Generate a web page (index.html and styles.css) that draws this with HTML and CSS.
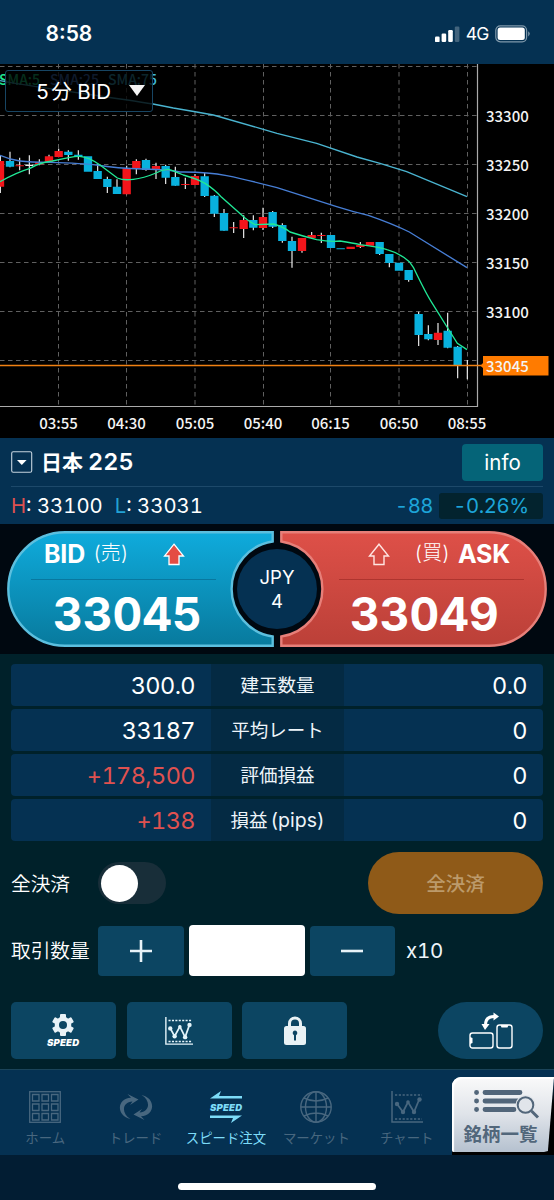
FILE: index.html
```html
<!DOCTYPE html>
<html lang="ja">
<head>
<meta charset="utf-8">
<title>スピード注文</title>
<link rel="stylesheet" href="styles.css">
</head>
<body>
<main class="app">
  <header class="status">
    <span class="clock">8:58</span>
    <div class="signals">
      <svg width="25" height="16" viewBox="0 0 25 16"><g fill="#fff"><rect y="10.5" width="4.6" height="5.8" rx="1.2"/><rect x="6.6" y="7.5" width="4.6" height="8.5" rx="1.2"/><rect x="13.2" y="4" width="4.6" height="12" rx="1.2"/><rect x="19.8" y="0.5" width="4.6" height="15.5" rx="1.2" opacity=".25"/></g></svg>
      <span class="net">4G</span>
      <svg width="36" height="18" viewBox="0 0 36 18"><rect x=".8" y=".8" width="30.8" height="16" rx="4.5" fill="none" stroke="#7f98aa" stroke-width="1.2"/><rect x="2.6" y="2.6" width="27.2" height="12.4" rx="2.5" fill="#fff"/><path d="M33.2 6.2q3.2 2.6 0 5.2z" fill="#7f98aa"/></svg>
    </div>
  </header>

  <section class="chart">
    <svg class="plot" width="554" height="374" viewBox="0 64 554 374">
      <g class="grid">
        <path d="M0 66.5H477M0 115.5H477M0 164.5H477M0 213.5H477M0 262.5H477M0 311.5H477M0 360.5H477"/>
        <path d="M58.5 64V406M126.5 64V406M195 64V406M263.5 64V406M330.5 64V406M399 64V406M467.5 64V406"/>
      </g>
      <path class="axis" d="M0 406.5H477.5V64"/>
      <g class="sma-label"><text x="-1" y="85"><tspan fill="#1fe58f">SMA:5</tspan><tspan fill="#4b84dc" x="50">SMA:25</tspan><tspan fill="#3fb8d8" x="108">SMA:75</tspan></text></g>
      <g transform="translate(0 60) scale(.33333)">
        <path class="wick" d="M1 285V399M30 275V322M59 293V331M88 286V343M118 298V316M147 284V305M176 266V292M205 271V302M235 271V299M293 313V357M322 350V399M351 358V402M380 317V403M409 298V343M438 296V332M468 308V357M497 314V372M526 320V377M556 353V387M585 342V375M614 339V411M643 405V471M672 447V512M701 486V519M731 466V534M760 466V511M789 443V510M818 453V504M847 490V548M876 530V623M906 534V578M935 516V536M964 518V549M1081 546V564M1139 546V585M1168 582V622M1226 630V665M1256 755V858M1285 796V841M1314 789V855M1343 758V865M1373 858V955M1402 900V958M76 316H100"/>
        <path class="up" d="M0 303V380M118 306V313M147 289V305M176 273V291M380 325V403M409 303V326M468 318V328M585 348V375M731 480V507M789 471V504M906 534V573M935 525V534M1052 560V567M1081 555V561M1110 546V557M1314 818V840M59 316V319M556 372V375M701 502V505M964 525V528"/>
        <path class="down" d="M30 303V320M205 275V285M235 284V291M264 289V335M293 333V357M322 357V381M351 380V402M438 300V330M497 318V353M526 351V377M614 349V408M643 407V461M672 459V512M760 480V503M818 456V500M847 495V543M876 543V573M993 525V564M1022 565V568M1139 546V582M1168 582V609M1197 608V632M1226 630V660M1256 762V825M1285 822V838M1343 812V863M1373 860V917"/>
        <path class="line" stroke="#4ab4d0" d="M0 62C100 82 330 110 459 132L520 144L590 156L640 165L790 208L831 220L950 250L1071 291L1140 310L1220 335L1401 410"/>
        <path class="line" stroke="#477ed5" d="M0 286Q30 299 60 303T150 307Q250 310 290 315Q350 325 430 327T540 336Q620 335 680 347T831 383Q960 424 1010 440T1105 466Q1180 492 1228 516L1401 623"/>
        <path class="line" stroke="#20e896" d="M0 365Q50 337 90 325Q120 307 157 303Q220 288 238 289Q265 290 300 315Q340 345 352 354Q370 362 400 358Q430 355 468 339Q485 329 505 328Q520 332 550 345Q590 356 615 370Q645 389 665 412L736 475Q754 489 766 494L820 492Q850 500 870 516Q910 529 950 539Q990 546 1020 543Q1060 549 1080 554Q1140 562 1161 569Q1200 580 1228 605L1240 622Q1280 705 1295 727L1343 804L1372 850L1401 869"/>
      </g>
      <path d="M0 365.5H483" stroke="#f08012" stroke-width="1.5"/>
      <path d="M483 356H548.5V375.5H483V368L480.5 365.7L483 363Z" fill="#ff7b00"/>
      <g class="ticks">
        <text x="486" y="122">33300</text><text x="486" y="171">33250</text><text x="486" y="220">33200</text><text x="486" y="269">33150</text><text x="486" y="318">33100</text><text x="486" y="372">33045</text>
      </g>
      <g class="ticks times">
        <text x="58.5" y="429">03:55</text><text x="126.5" y="429">04:30</text><text x="195" y="429">05:05</text><text x="263" y="429">05:40</text><text x="330.5" y="429">06:15</text><text x="399" y="429">06:50</text><text x="467" y="429">08:55</text>
      </g>
    </svg>
    <button class="period"><span>5<i></i>分 BID</span><svg width="16" height="11" viewBox="0 0 16 11"><path d="M0 0H16L8 11Z" fill="#f4f4f4"/></svg></button>
  </section>

  <section class="symbol">
    <div class="symbol-head">
      <svg width="22" height="22" viewBox="0 0 22 22"><rect x=".7" y=".7" width="20" height="20.6" rx="1.5" fill="none" stroke="#c5d3de" stroke-width="1.1"/><path d="M6 9H15.6L10.8 14Z" fill="#fff"/></svg>
      <h1><span>日本</span>225</h1>
      <button class="info">info</button>
    </div>
    <div class="symbol-sub">
      <span class="hl"><b class="red">H</b>: 33100</span>
      <span class="hl"><b class="blue">L</b>: 33031</span>
      <span class="diff">-88</span>
      <span class="pct">-0.26%</span>
    </div>
  </section>

  <section class="quotes">
    <button class="quote bid">
      <svg class="shape" width="267" height="116" viewBox="0 0 267 116"><defs><linearGradient id="gb" x2="0" y2="1"><stop stop-color="#0fabdc"/><stop offset="1" stop-color="#087a9d"/></linearGradient></defs><path d="M58 1.3H265.700V10.500A48 48 0 0 0 265.700 105.500V114.700H58A56.700 56.700 0 0 1 58 1.3Z" fill="url(#gb)" stroke="#5cbfde" stroke-width="2.400"/></svg>
      <span class="q-head"><strong>BID</strong><small>(売)</small><svg width="22" height="23" viewBox="0 0 22 23"><path d="M11 1.200L20.500 13H16V21.500H6V13H1.500Z" fill="#e44d43" stroke="#fff" stroke-width="1.300"/></svg></span>
      <span class="price">33045</span>
    </button>
    <button class="quote ask">
      <svg class="shape" width="267" height="116" viewBox="0 0 267 116"><defs><linearGradient id="gr" x2="0" y2="1"><stop stop-color="#de5048"/><stop offset="1" stop-color="#bb4038"/></linearGradient></defs><path d="M209 1.3H1.300V10.500A48 48 0 0 1 1.300 105.500V114.700H209A56.700 56.700 0 0 0 209 1.3Z" fill="url(#gr)" stroke="#e77f79" stroke-width="2.400"/></svg>
      <span class="q-head"><svg width="22" height="23" viewBox="0 0 22 23"><path d="M11 1.200L20.500 13H16V21.500H6V13H1.500Z" fill="none" stroke="#ffe5e2" stroke-width="1.400"/></svg><small>(買)</small><strong>ASK</strong></span>
      <span class="price">33049</span>
    </button>
    <div class="spread"><span>JPY</span><span>4</span></div>
  </section>

  <section class="panel">
    <div class="positions">
      <div class="row"><span>300.0</span><em>建玉数量</em><span>0.0</span></div>
      <div class="row"><span>33187</span><em>平均レート</em><span>0</span></div>
      <div class="row"><span class="red">+178,500</span><em>評価損益</em><span>0</span></div>
      <div class="row"><span class="red">+138</span><em>損益<u>(pips)</u></em><span>0</span></div>
    </div>
    <div class="close-row"><label>全決済</label><span class="toggle"><i></i></span><button class="close-all">全決済</button></div>
    <div class="qty"><label>取引数量</label>
      <button class="step"><svg width="22" height="24" viewBox="0 0 22 24"><path d="M0 12H22M11 1V23" stroke="#e9f3f8" stroke-width="2.600"/></svg></button>
      <input class="amount" aria-label="取引数量">
      <button class="step"><svg width="22" height="24" viewBox="0 0 22 24"><path d="M0 12H22" stroke="#e9f3f8" stroke-width="2.600"/></svg></button>
      <span class="mult">x10</span></div>
    <div class="tools">
      <button><svg width="36" height="34" viewBox="0 0 36 34"><g transform="translate(17 11)"><g fill="#e9f2f7"><rect x="-3" y="-11" width="6" height="22" rx="1"/><rect x="-3" y="-11" width="6" height="22" rx="1" transform="rotate(60)"/><rect x="-3" y="-11" width="6" height="22" rx="1" transform="rotate(120)"/><circle r="8.300"/></g><circle r="4" fill="#0c4562"/></g><text class="speed" x="17" y="32" textLength="32" fill="#fff">SPEED</text></svg></button>
      <button><svg width="28" height="28" viewBox="0 0 32 32"><g fill="none" stroke="#e4f4fa" stroke-width="1.600"><path d="M1 0V31H32"/><path d="M4 4H31M4 28H31" stroke-dasharray="2.400 1.500"/><path d="M6 13L11 22L17 11L23 23L28 9" stroke-width="2"/></g><g fill="#e4f4fa"><circle cx="6" cy="13" r="2.500"/><circle cx="11" cy="22" r="2.500"/><circle cx="17" cy="11" r="2"/><circle cx="23" cy="23" r="2.500"/><circle cx="28" cy="9" r="2.500"/></g></svg></button>
      <button><svg width="22" height="30" viewBox="0 0 22 30"><path d="M5.500 11V7.500a5.500 5.500 0 0 1 11 0V11" fill="none" stroke="#e9f2f5" stroke-width="3"/><rect y="10" width="22" height="19" rx="2.500" fill="#e9f2f5"/><path d="M11 14.500a2.500 2.500 0 0 1 1 4.700V24.500H10V19.200A2.500 2.500 0 0 1 11 14.500" fill="#0c4562"/></svg></button>
      <button class="rotate"><svg width="44" height="38" viewBox="0 0 44 38"><g fill="none" stroke="#fff" stroke-width="1.400"><rect x="1" y="21" width="23" height="15" rx="2.500"/><rect x="28" y="13" width="15" height="23" rx="2.500"/><path d="M16.500 13Q16.500 4.500 25 4.500" stroke-width="3"/></g><path d="M24.500 .5L30 4.500L24.500 8.500ZM12.500 12H20.500L16 18ZM31.500 13H39.500L38.500 15.500H32.500ZM1 25L3.500 26V31L1 32Z" fill="#fff"/></svg></button>
    </div>
  </section>

  <nav class="tabs">
    <a><svg width="32" height="32" viewBox="0 0 32 32"><g fill="none" stroke="currentColor" stroke-width="1.300"><rect x=".7" y=".7" width="30.600" height="30.600"/><path d="M3.500 3.500H10V10H3.500ZM13 3.500H19.500V10H13ZM22.500 3.500H29V10H22.500ZM3.500 13H10V19.500H3.500ZM13 13H19.500V19.500H13ZM22.500 13H29V19.500H22.500ZM3.500 22.500H10V29H3.500ZM13 22.500H19.500V29H13ZM22.500 22.500H29V29H22.500Z"/></g></svg><span>ホーム</span></a>
    <a><svg width="34" height="32" viewBox="0 0 34 32"><g fill="currentColor"><path d="M11.500 28C-3 25 -2.500 7.500 12 6.800L8.500 3L19.500 8.500L11 14L13.500 10.500C3 11 2 22.500 11.500 28Z"/><path d="M22.500 4C37 7 36.500 24.500 22 25.200L25.500 29L14.500 23.500L23 18L20.500 21.500C31 21 32 9.500 22.500 4Z"/></g></svg><span>トレード</span></a>
    <a class="active"><svg width="34" height="32" viewBox="0 0 34 32"><path d="M1 7.500L12 0L10 5H33V7.500ZM33 24.500L22 32L24 27H1V24.500Z" fill="currentColor"/><text class="speed" x="17" y="19.600" textLength="32" fill="currentColor">SPEED</text></svg><span>スピード注文</span></a>
    <a><svg width="32" height="32" viewBox="0 0 32 32"><g fill="none" stroke="currentColor" stroke-width="1.400"><circle cx="16" cy="16" r="15.200"/><ellipse cx="16" cy="16" rx="10.500" ry="15.200"/><path d="M16 1V31M1 16H31M4 7Q16 13 28 7M4 25Q16 19 28 25"/></g></svg><span>マーケット</span></a>
    <a><svg width="32" height="32" viewBox="0 0 32 32"><g fill="none" stroke="currentColor" stroke-width="1.500"><path d="M1 0V31H32"/><path d="M4 4H31M4 28H31" stroke-dasharray="2.200 1.600"/><path d="M6 13L12 21L17 11L23 21L28 9" stroke-width="1.800"/></g><g fill="currentColor"><circle cx="6" cy="13" r="2.200"/><circle cx="12" cy="21" r="2.200"/><circle cx="17" cy="11" r="1.800"/><circle cx="23" cy="21" r="2.200"/><circle cx="28.500" cy="8.500" r="2.200"/></g></svg><span>チャート</span></a>
    <div class="list-wrap"><button class="list"><svg width="66" height="30" viewBox="0 0 66 30"><g stroke="#52667a" stroke-linecap="round" stroke-width="4.800"><path d="M2.500 3.500H2.600M2.500 12H2.600M2.500 20.500H2.600M11 3.500H46M11 12H44M11 20.500H40"/></g><circle cx="51.500" cy="16" r="10" fill="#e1e5ea"/><circle cx="51.500" cy="16" r="7.800" fill="#e1e5ea" stroke="#52667a" stroke-width="2"/><path d="M57.500 22L64 28.500" stroke="#52667a" stroke-width="3"/></svg><span>銘柄一覧</span></button></div>
  </nav>
  <footer class="home"><i></i></footer>
</main>
</body>
</html>
```
FILE: styles.css
```css
* { box-sizing: border-box; }
body { margin: 0; background: #021d33; color: #fff; font-family: Inter, "Noto Sans CJK JP", sans-serif; font-variant-numeric: tabular-nums; }
button { border: 0; padding: 0; margin: 0; color: inherit; font: inherit; font-variant-numeric: inherit; }
svg { display: block; flex: none; }
.app { width: 554px; height: 1200px; overflow: hidden; display: flex; flex-direction: column; }
.red { color: #df5150; }
.blue { color: #22a2d5; }

.status { height: 64px; background: #053152; display: flex; justify-content: space-between; align-items: center; padding: 4px 23px 0 45.5px; }
.clock { font-size: 21px; font-weight: 600; font-variant-numeric: normal; padding-bottom: 1px; }
.signals { display: flex; align-items: center; gap: 5.5px; }
.net { font-size: 17.500px; line-height: 18px; letter-spacing: -.8px; margin-right: 1px; }

.chart { position: relative; height: 374px; background: #000; }
.grid path { fill: none; stroke: #606060; stroke-width: 1; stroke-dasharray: 4.500 3.500; }
.axis { fill: none; stroke: #aaa; stroke-width: 1.2; }
.wick { stroke: #eee; stroke-width: 3.5; fill: none; }
.up { stroke: #f3151b; stroke-width: 25; }
.down { stroke: #08b1de; stroke-width: 25; }
.line { fill: none; stroke-width: 4; }
.ticks text { font: 500 15px "Noto Sans CJK JP", sans-serif; fill: #f4f4f4; }
.times text { text-anchor: middle; }
.sma-label text { font: 500 14px "Noto Sans CJK JP", sans-serif; }
.period { position: absolute; left: 5px; top: 6px; width: 148px; height: 42px; border: 1px solid #174563; border-radius: 3px; background: rgba(0, 0, 0, .8); display: flex; align-items: center; justify-content: space-between; padding: 0 7px 2px 30px; font-size: 20.5px; }
.period span { white-space: nowrap; }
.period i { display: inline-block; width: 2px; }

.symbol { height: 86px; background: #053152; padding: 0 11px; }
.symbol-head { height: 49px; border-bottom: 1px solid #1d496a; display: flex; align-items: center; }
h1 { margin: 0 auto 0 8px; font-size: 23.5px; font-weight: 600; line-height: 30px; }
h1 span { font-size: 21px; font-weight: 700; margin-right: 5px; }
.info { width: 81px; height: 37px; border-radius: 4px; background: #056478; font-size: 20.5px; }
.symbol-sub { height: 37px; display: flex; align-items: center; font-size: 20.3px; }
.symbol-sub b { font-weight: 400; }
.hl { margin-right: 12px; white-space: pre; }
.diff { margin-left: auto; color: #1da5d9; letter-spacing: -.5px; }
.pct { margin-left: 6px; width: 104px; height: 26px; line-height: 26px; border-radius: 3px; background: #03232e; color: #1da5d9; text-align: center; letter-spacing: -.4px; }

.quotes { position: relative; height: 130px; background: #000810; padding: 7px 7px 7px; display: flex; justify-content: space-between; }
.quote { position: relative; width: 267px; height: 116px; padding-bottom: 5px; background: none; text-align: left; display: block; }
.shape { position: absolute; left: 0; top: 0; }
.q-head { position: relative; display: flex; align-items: center; height: 48px; margin-left: 24px; width: 185px; border-bottom: 1.5px solid rgba(0, 40, 70, .28); padding: 0 31px 3px 13px; }
.q-head strong { font-size: 25px; line-height: 30px; letter-spacing: -.2px; }
.q-head small { font-size: 20px; line-height: 24px; font-weight: 300; margin-left: 8px; padding-bottom: 2px; }
.q-head svg { margin-left: auto; }
.ask .q-head { margin-left: 59px; border-color: rgba(90, 0, 0, .28); padding: 0 14px 3px 29px; }
.ask .q-head svg { margin: 0; }
.ask .q-head small { margin: 0 8px 0 auto; }
.price { position: relative; display: block; font-size: 46px; font-weight: 700; line-height: 54px; margin-top: 7px; padding-left: 46px; }
.ask .price { padding-left: 70px; }
.spread { position: absolute; left: 237px; top: 25px; width: 80px; height: 80px; border-radius: 50%; background: #053152; display: flex; flex-direction: column; align-items: center; justify-content: center; font-size: 18.5px; line-height: 24px; }

.panel { height: 415px; padding: 10px 11px 0; background: #00212a; }
.positions { display: grid; gap: 3px; }
.row { height: 42px; display: grid; grid-template-columns: 200px 133px 1fr; border-radius: 4px; overflow: hidden; background: #053152; line-height: 43px; }
.row span { font-size: 23.5px; letter-spacing: -.6px; text-align: right; padding-right: 16px; }
.row em { background: #042a43; font-style: normal; font-size: 18.500px; text-align: center; color: #eef5fa; white-space: nowrap; font-weight: 400; }
.row u { text-decoration: none; font-size: 19.5px; margin-left: 3px; }
.close-row { height: 62px; margin-top: 11px; display: flex; align-items: center; }
label { width: 87px; font-size: 19.7px; line-height: 30px; padding-top: 1px; font-weight: 350; white-space: nowrap; }
.toggle { width: 68px; height: 42px; border-radius: 21px; background: #182e39; padding: 2.500px; }
.toggle i { display: block; width: 37px; height: 37px; border-radius: 50%; background: #fff; }
.close-all { width: 175px; height: 62px; border-radius: 31px; margin-left: auto; padding-bottom: 2px; background: #8f5a18; color: #bc9a6b; font-size: 19.500px; font-weight: 500; }
.qty { display: flex; align-items: center; height: 51px; margin-top: 11px; }
.step { width: 85.500px; height: 50px; border-radius: 4px; background: #0c4562; display: grid; place-items: center; }
.amount { width: 116px; height: 51px; margin: 0 5px; border: 0; border-radius: 4px; background: #fff; }
.mult { font-size: 20.5px; letter-spacing: -.3px; margin-left: 11px; color: #eef5fa; }
.tools { display: flex; gap: 10.500px; margin-top: 26px; }
.tools button { width: 105px; height: 57px; border-radius: 5px; background: #0c4562; display: grid; place-items: center; }
.tools .rotate { margin-left: auto; border-radius: 29px; }
.speed { font: italic 900 9.500px Inter, sans-serif; text-anchor: middle; }

.tabs { height: 86px; background: #053152; border-top: 1.5px solid #1b4459; display: flex; }
.tabs a { width: 90.400px; flex: none; display: flex; flex-direction: column; align-items: center; color: #48677f; padding-top: 21px; }
.tabs a span { font-size: 13.400px; line-height: 20px; margin-top: 5px; white-space: nowrap; }
.tabs a.active { color: #7ddcf8; }
.list-wrap { flex: 1; background: linear-gradient(#053152 12%, #000 40%); padding: 7px 0 3px; }
.list { display: flex; flex-direction: column; align-items: center; width: 102px; height: 75px; padding-top: 12px; border-radius: 9px 0 10px 2px; clip-path: polygon(0 0, 100% 0, 94% 100%, 0 100%); background: linear-gradient(#fafafa, #dfe3e9 50%, #b5c1cf); box-shadow: inset 2px 2px 1px #fff; color: #52677b; }
.list svg { margin-left: 8px; }
.list span { font-size: 18.500px; font-weight: 700; line-height: 24px; margin: 3px 5px 0 0; white-space: nowrap; }
.home { flex: 1; padding-top: 28px; display: flex; justify-content: center; }
.home i { width: 198px; height: 7px; border-radius: 4px; background: #fff; }
```
